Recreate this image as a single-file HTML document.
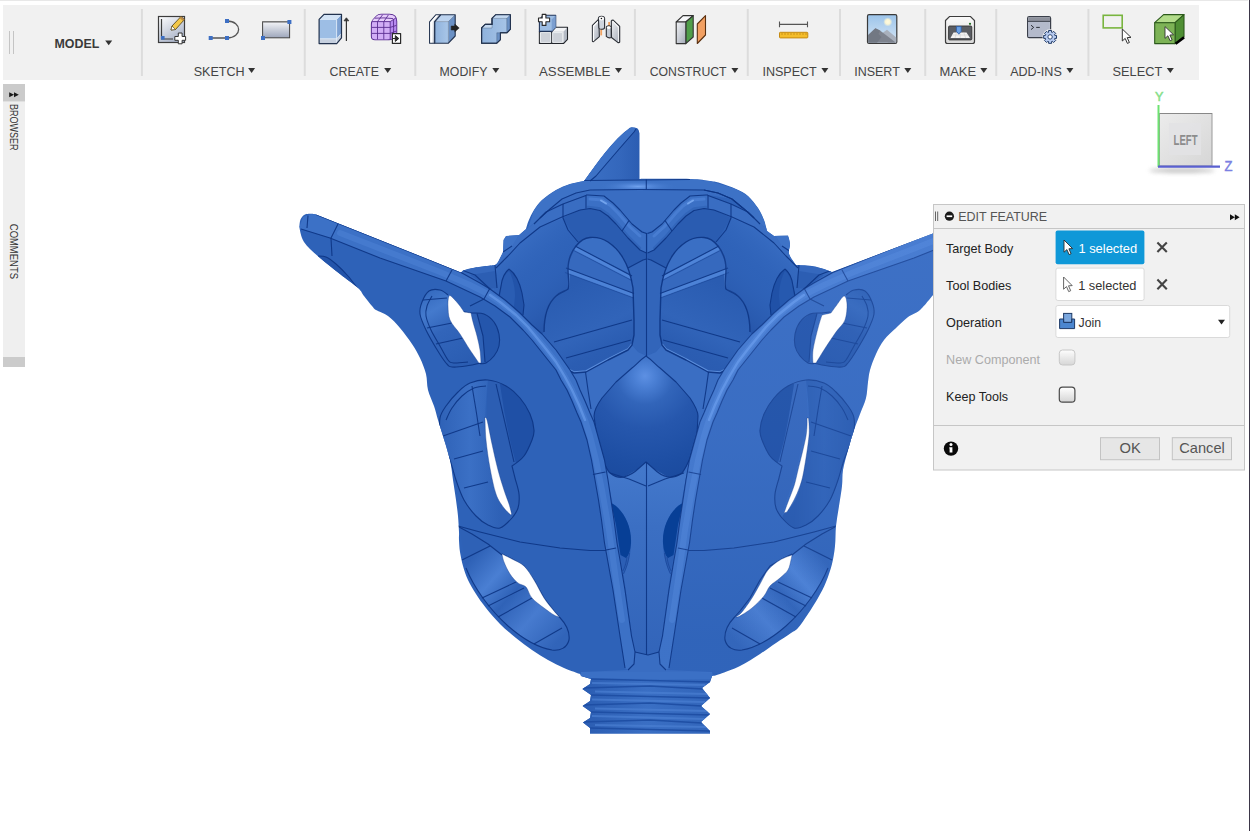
<!DOCTYPE html>
<html><head><meta charset="utf-8"><title>Edit Feature</title>
<style>
html,body{margin:0;padding:0;background:#fff;}
body{width:1250px;height:831px;position:relative;overflow:hidden;font-family:"Liberation Sans",sans-serif;color:#333;}
.abs{position:absolute;}
#topline{left:0;top:0;width:1250px;height:2px;background:#e9e9e9;}
#rightedge{left:1248.7px;top:0;width:1.3px;height:831px;background:#3b3648;}
#toolbar{left:3px;top:5px;width:1196px;height:75px;background:#f1f1f1;}
.sep{position:absolute;top:4px;width:2px;height:68px;background:#dedede;}
.tl{position:absolute;top:59px;font-size:13px;color:#3c3c3c;white-space:nowrap;letter-spacing:-0.2px;line-height:14px;}
.tl i{display:inline-block;width:0;height:0;border-left:3.5px solid transparent;border-right:3.5px solid transparent;border-top:5px solid #333;margin-left:4px;vertical-align:2px;}
#leftpanel{left:3px;top:84px;width:22px;height:283px;background:#efefef;}
#leftpanel .cap{position:absolute;left:0;top:0;width:22px;height:17px;background:#cdcdcd;}
#leftpanel .bot{position:absolute;left:0;bottom:0;width:22px;height:10px;background:#cdcdcd;}
.vt{position:absolute;font-size:9.5px;color:#333;transform-origin:0 0;transform:rotate(90deg);white-space:nowrap;line-height:10px;}
#dialog{left:933px;top:204px;width:310px;height:265px;background:#f1f1f1;border:1px solid #c9c9c9;}
#dialog .lbl{position:absolute;left:12px;font-size:13px;color:#222;white-space:nowrap;line-height:15px;}
</style></head><body>
<svg class="abs" id="model" style="left:0;top:0" width="1250" height="831" viewBox="0 0 1250 831">
<defs>
<linearGradient id="gB" gradientUnits="userSpaceOnUse" x1="300" y1="0" x2="935" y2="0"><stop offset="0" stop-color="#3568be"/><stop offset="0.45" stop-color="#2f62b8"/><stop offset="0.62" stop-color="#3a6fc3"/><stop offset="1" stop-color="#3f75c9"/></linearGradient>
</defs>
<clipPath id="cs"><path d="M299.4,227.0 C299.4,227.0 299.6,221.6 300.5,219.5 C301.4,217.4 303.2,215.5 305.0,214.6 C306.8,213.7 309.2,213.8 311.0,213.8 C312.8,213.8 316.0,214.4 316.0,214.4 L430.0,260.0 L461.0,272.5 L463.0,270.5 C463.0,270.5 469.7,268.4 475.0,267.5 C480.3,266.6 495.0,265.0 495.0,265.0 C495.0,265.0 496.7,264.2 498.0,262.0 C499.3,259.8 503.0,252.0 503.0,252.0 L503.5,240.0 L506.0,236.0 L519.0,235.0 L526.0,229.0 C526.0,229.0 527.2,224.2 528.5,221.0 C529.8,217.8 531.8,213.5 534.0,210.0 C536.2,206.5 538.3,203.3 542.0,200.0 C545.7,196.7 551.3,192.7 556.0,190.0 C560.7,187.3 565.3,185.5 570.0,184.0 C574.7,182.5 584.0,181.0 584.0,181.0 C584.0,181.0 588.7,174.5 592.0,170.0 C595.3,165.5 599.7,159.3 604.0,154.0 C608.3,148.7 613.8,142.3 618.0,138.0 C622.2,133.7 626.5,130.2 629.0,128.4 C631.5,126.7 631.6,127.5 633.0,127.5 C634.4,127.5 636.4,127.6 637.5,128.5 C638.6,129.4 639.4,133.0 639.4,133.0 L639.4,179.0 C639.4,179.0 678.2,178.7 690.0,179.0 C701.8,179.3 705.0,180.3 710.0,181.0 C715.0,181.7 715.7,181.7 720.0,183.0 C724.3,184.3 731.3,186.8 736.0,189.0 C740.7,191.2 744.3,192.8 748.0,196.0 C751.7,199.2 755.3,204.0 758.0,208.0 C760.7,212.0 762.5,216.2 764.0,220.0 C765.5,223.8 767.0,231.0 767.0,231.0 L774.0,236.0 L788.0,235.6 C788.0,235.6 789.8,240.9 790.0,244.0 C790.2,247.1 788.0,250.5 789.0,254.0 C790.0,257.5 796.0,265.0 796.0,265.0 C796.0,265.0 807.3,265.3 812.0,266.0 C816.7,266.7 820.7,268.0 824.0,269.0 C827.3,270.0 832.0,272.0 832.0,272.0 L933.0,233.6 L945.0,229.0 L945.0,290.0 L933.0,295.0 C933.0,295.0 924.2,306.3 920.0,310.0 C915.8,313.7 912.0,314.0 908.0,317.0 C904.0,320.0 900.0,324.2 896.0,328.0 C892.0,331.8 887.3,335.7 884.0,340.0 C880.7,344.3 878.3,349.0 876.0,354.0 C873.7,359.0 871.3,365.3 870.0,370.0 C868.7,374.7 868.7,377.3 868.0,382.0 C867.3,386.7 867.3,392.7 866.0,398.0 C864.7,403.3 862.0,408.7 860.0,414.0 C858.0,419.3 856.0,424.0 854.0,430.0 C852.0,436.0 849.8,443.3 848.0,450.0 C846.2,456.7 844.0,464.0 843.0,470.0 C842.0,476.0 842.7,480.0 842.0,486.0 C841.3,492.0 840.0,499.3 839.0,506.0 C838.0,512.7 836.7,519.3 836.0,526.0 C835.3,532.7 835.7,539.7 835.0,546.0 C834.3,552.3 833.5,558.0 832.0,564.0 C830.5,570.0 828.3,576.3 826.0,582.0 C823.7,587.7 821.0,592.7 818.0,598.0 C815.0,603.3 811.3,609.0 808.0,614.0 C804.7,619.0 800.8,624.8 798.0,628.0 C795.2,631.2 794.7,630.5 791.0,633.0 C787.3,635.5 781.2,639.5 776.0,643.0 C770.8,646.5 766.0,650.2 760.0,654.0 C754.0,657.8 746.7,662.7 740.0,666.0 C733.3,669.3 724.7,672.3 720.0,674.0 C715.3,675.7 712.0,676.0 712.0,676.0 L710.0,682.0 L702.0,688.0 L710.0,698.0 L701.0,706.0 L710.0,714.0 L701.0,722.0 L710.0,731.0 L710.0,733.6 L590.0,733.6 L590.0,728.0 L583.0,722.4 L590.0,718.0 L591.0,712.0 L582.6,706.0 L590.0,701.0 L591.0,695.0 L582.4,689.0 L590.0,684.0 L591.0,679.0 L581.0,676.0 L580.0,674.0 C580.0,674.0 569.3,670.3 564.0,668.0 C558.7,665.7 553.3,663.0 548.0,660.0 C542.7,657.0 537.3,653.7 532.0,650.0 C526.7,646.3 521.3,642.3 516.0,638.0 C510.7,633.7 505.0,629.0 500.0,624.0 C495.0,619.0 490.0,613.0 486.0,608.0 C482.0,603.0 479.0,598.7 476.0,594.0 C473.0,589.3 470.2,584.7 468.0,580.0 C465.8,575.3 464.3,570.7 463.0,566.0 C461.7,561.3 460.7,556.3 460.0,552.0 C459.3,547.7 459.2,543.3 459.0,540.0 C458.8,536.7 459.2,536.0 459.0,532.0 C458.8,528.0 458.5,521.3 458.0,516.0 C457.5,510.7 456.8,506.0 456.0,500.0 C455.2,494.0 454.0,486.7 453.0,480.0 C452.0,473.3 451.7,467.3 450.0,460.0 C448.3,452.7 445.0,442.7 443.0,436.0 C441.0,429.3 439.5,425.0 438.0,420.0 C436.5,415.0 435.7,411.0 434.0,406.0 C432.3,401.0 429.3,395.3 428.0,390.0 C426.7,384.7 427.3,379.3 426.0,374.0 C424.7,368.7 422.3,363.0 420.0,358.0 C417.7,353.0 415.3,349.0 412.0,344.0 C408.7,339.0 404.0,332.7 400.0,328.0 C396.0,323.3 392.0,319.0 388.0,316.0 C384.0,313.0 378.7,311.7 376.0,310.0 C373.3,308.3 374.0,308.3 372.0,306.0 C370.0,303.7 366.3,299.0 364.0,296.0 C361.7,293.0 362.0,291.7 358.0,288.0 C354.0,284.3 346.3,279.0 340.0,274.0 C333.7,269.0 326.0,263.3 320.0,258.0 C314.0,252.7 307.4,247.2 304.0,242.0 C300.6,236.8 299.4,227.0 299.4,227.0 Z"/></clipPath>
<g id="sil"><path fill="#2e62b8" d="M299.4,227.0 C299.4,227.0 299.6,221.6 300.5,219.5 C301.4,217.4 303.2,215.5 305.0,214.6 C306.8,213.7 309.2,213.8 311.0,213.8 C312.8,213.8 316.0,214.4 316.0,214.4 L430.0,260.0 L461.0,272.5 L463.0,270.5 C463.0,270.5 469.7,268.4 475.0,267.5 C480.3,266.6 495.0,265.0 495.0,265.0 C495.0,265.0 496.7,264.2 498.0,262.0 C499.3,259.8 503.0,252.0 503.0,252.0 L503.5,240.0 L506.0,236.0 L519.0,235.0 L526.0,229.0 C526.0,229.0 527.2,224.2 528.5,221.0 C529.8,217.8 531.8,213.5 534.0,210.0 C536.2,206.5 538.3,203.3 542.0,200.0 C545.7,196.7 551.3,192.7 556.0,190.0 C560.7,187.3 565.3,185.5 570.0,184.0 C574.7,182.5 584.0,181.0 584.0,181.0 C584.0,181.0 588.7,174.5 592.0,170.0 C595.3,165.5 599.7,159.3 604.0,154.0 C608.3,148.7 613.8,142.3 618.0,138.0 C622.2,133.7 626.5,130.2 629.0,128.4 C631.5,126.7 631.6,127.5 633.0,127.5 C634.4,127.5 636.4,127.6 637.5,128.5 C638.6,129.4 639.4,133.0 639.4,133.0 L639.4,179.0 C639.4,179.0 678.2,178.7 690.0,179.0 C701.8,179.3 705.0,180.3 710.0,181.0 C715.0,181.7 715.7,181.7 720.0,183.0 C724.3,184.3 731.3,186.8 736.0,189.0 C740.7,191.2 744.3,192.8 748.0,196.0 C751.7,199.2 755.3,204.0 758.0,208.0 C760.7,212.0 762.5,216.2 764.0,220.0 C765.5,223.8 767.0,231.0 767.0,231.0 L774.0,236.0 L788.0,235.6 C788.0,235.6 789.8,240.9 790.0,244.0 C790.2,247.1 788.0,250.5 789.0,254.0 C790.0,257.5 796.0,265.0 796.0,265.0 C796.0,265.0 807.3,265.3 812.0,266.0 C816.7,266.7 820.7,268.0 824.0,269.0 C827.3,270.0 832.0,272.0 832.0,272.0 L933.0,233.6 L945.0,229.0 L945.0,290.0 L933.0,295.0 C933.0,295.0 924.2,306.3 920.0,310.0 C915.8,313.7 912.0,314.0 908.0,317.0 C904.0,320.0 900.0,324.2 896.0,328.0 C892.0,331.8 887.3,335.7 884.0,340.0 C880.7,344.3 878.3,349.0 876.0,354.0 C873.7,359.0 871.3,365.3 870.0,370.0 C868.7,374.7 868.7,377.3 868.0,382.0 C867.3,386.7 867.3,392.7 866.0,398.0 C864.7,403.3 862.0,408.7 860.0,414.0 C858.0,419.3 856.0,424.0 854.0,430.0 C852.0,436.0 849.8,443.3 848.0,450.0 C846.2,456.7 844.0,464.0 843.0,470.0 C842.0,476.0 842.7,480.0 842.0,486.0 C841.3,492.0 840.0,499.3 839.0,506.0 C838.0,512.7 836.7,519.3 836.0,526.0 C835.3,532.7 835.7,539.7 835.0,546.0 C834.3,552.3 833.5,558.0 832.0,564.0 C830.5,570.0 828.3,576.3 826.0,582.0 C823.7,587.7 821.0,592.7 818.0,598.0 C815.0,603.3 811.3,609.0 808.0,614.0 C804.7,619.0 800.8,624.8 798.0,628.0 C795.2,631.2 794.7,630.5 791.0,633.0 C787.3,635.5 781.2,639.5 776.0,643.0 C770.8,646.5 766.0,650.2 760.0,654.0 C754.0,657.8 746.7,662.7 740.0,666.0 C733.3,669.3 724.7,672.3 720.0,674.0 C715.3,675.7 712.0,676.0 712.0,676.0 L710.0,682.0 L702.0,688.0 L710.0,698.0 L701.0,706.0 L710.0,714.0 L701.0,722.0 L710.0,731.0 L710.0,733.6 L590.0,733.6 L590.0,728.0 L583.0,722.4 L590.0,718.0 L591.0,712.0 L582.6,706.0 L590.0,701.0 L591.0,695.0 L582.4,689.0 L590.0,684.0 L591.0,679.0 L581.0,676.0 L580.0,674.0 C580.0,674.0 569.3,670.3 564.0,668.0 C558.7,665.7 553.3,663.0 548.0,660.0 C542.7,657.0 537.3,653.7 532.0,650.0 C526.7,646.3 521.3,642.3 516.0,638.0 C510.7,633.7 505.0,629.0 500.0,624.0 C495.0,619.0 490.0,613.0 486.0,608.0 C482.0,603.0 479.0,598.7 476.0,594.0 C473.0,589.3 470.2,584.7 468.0,580.0 C465.8,575.3 464.3,570.7 463.0,566.0 C461.7,561.3 460.7,556.3 460.0,552.0 C459.3,547.7 459.2,543.3 459.0,540.0 C458.8,536.7 459.2,536.0 459.0,532.0 C458.8,528.0 458.5,521.3 458.0,516.0 C457.5,510.7 456.8,506.0 456.0,500.0 C455.2,494.0 454.0,486.7 453.0,480.0 C452.0,473.3 451.7,467.3 450.0,460.0 C448.3,452.7 445.0,442.7 443.0,436.0 C441.0,429.3 439.5,425.0 438.0,420.0 C436.5,415.0 435.7,411.0 434.0,406.0 C432.3,401.0 429.3,395.3 428.0,390.0 C426.7,384.7 427.3,379.3 426.0,374.0 C424.7,368.7 422.3,363.0 420.0,358.0 C417.7,353.0 415.3,349.0 412.0,344.0 C408.7,339.0 404.0,332.7 400.0,328.0 C396.0,323.3 392.0,319.0 388.0,316.0 C384.0,313.0 378.7,311.7 376.0,310.0 C373.3,308.3 374.0,308.3 372.0,306.0 C370.0,303.7 366.3,299.0 364.0,296.0 C361.7,293.0 362.0,291.7 358.0,288.0 C354.0,284.3 346.3,279.0 340.0,274.0 C333.7,269.0 326.0,263.3 320.0,258.0 C314.0,252.7 307.4,247.2 304.0,242.0 C300.6,236.8 299.4,227.0 299.4,227.0 Z"/></g>
<g clip-path="url(#cs)">
<!--CENTER-->
<g id="center">
<!-- top band -->
<path fill="#3d72c6" d="M528,228 L534,210 L542,200 L556,190 L570,184 L584,181 L639,179 L690,179 L710,181 L736,189 L748,196 L758,208 L764,220 L766,228 L756,221 L746,210 L732,199 L718,193 L704,190 L640,189.5 L590,190 L576,193 L562,199 L550,209 L540,218 Z"/>
<radialGradient id="gTB" gradientUnits="userSpaceOnUse" cx="638" cy="186.5" r="40" gradientTransform="translate(0,158.5) scale(1,0.15)"><stop offset="0" stop-color="#73a4f0" stop-opacity="0.95"/><stop offset="0.4" stop-color="#5a8ee0" stop-opacity="0.6"/><stop offset="1" stop-color="#3d72c6" stop-opacity="0"/></radialGradient><path fill="url(#gTB)" d="M584,181 L639,179.5 L690,179.5 L710,181.5 L704,190 L640,189.5 L590,190 Z"/>
<!-- dome face below band -->
<path fill="#396dc2" d="M590,190 L640,189.5 L704,190 L718,193 L732,199 L708,195 L696,195 L684,202 L674,212 L664,222 L654,230 L646.5,233 L640,230 L630,222 L620,212 L610,202 L598,195 L586,195 L563,204 L550,209 L562,199 L576,193 Z"/>
<!-- V ridge arms -->
<g id="varm">
<path fill="#3b70c5" d="M586,195 L588,195 L604,196 L613,203 L620,210 L632,224 L642,232 L646.5,233.5 L646.5,253 L640,250 L628,238 L616,224 L608,216 L600,210.5 L590,208.5 L586,208.5 Z"/>
<path fill="none" stroke="#5388dc" stroke-width="3" stroke-opacity="0.55" stroke-linecap="round" stroke-linejoin="round" d="M590,199 L602,200 L611,206 L618,213 L630,227 L640,236"/>
<path fill="none" stroke="#7aaaf2" stroke-width="2" stroke-linecap="round" opacity="0.85" d="M601,200.5 L606,203.5"/>
<path fill="none" stroke="#2a5bb0" stroke-width="2.4" stroke-opacity="0.5" stroke-linecap="round" stroke-linejoin="round" d="M588,207 L600,208.5 L608,214 L616,222 L628,236 L640,248"/>
<path fill="#396dc2" d="M563,204 L586,195.5 L586,208.5 L580,210 L563,218 Z"/>
</g>
<use href="#varm" transform="translate(1294,0) scale(-1,1)"/>
<!-- dark panels below ridge -->
<g id="dpanel">
<path fill="#2a5cb1" d="M563,218 L580,210 L590,208.5 L600,210.5 L608,216 L616,224 L628,238 L640,250 L646.5,253 L646.5,259 L643,260 L628,268 L626,275 L600,262 L580,258 L578,242 Z"/>
</g>
<use href="#dpanel" transform="translate(1294,0) scale(-1,1)"/>
<!-- openings -->
<clipPath id="cOp"><path d="M544,332 C544,318 547,304 556,296 C560,292 566,291 568,289 C570,286 568,278 568,270 C568,260 571,252 576,246 C580,241 584,238 590,237.5 C596,237 602,238 608,242 C614,246 619,251 623,258 C628,266 631,276 633,288 L634,320 L634,335 L632,345 L628,350 L608,360 L586,372 L574,373 L568,370 L552,348 Z"/></clipPath>
<g id="opening">
<g clip-path="url(#cOp)">
<path fill="#2c5fb4" d="M530,230 H640 V380 H530 Z"/>
<path fill="#3a6fc4" d="M566,230 H640 V279 L577,247 Z"/>
<path fill="#4e84d8" d="M575,246 L632,276 L632,280.5 L574,250.5 Z"/>
<path fill="#3669be" d="M574,250.5 L632,280.5 L634,294 L566,268.5 Z"/>
<path fill="#4c82d6" d="M566,268 L634,293.5 L634,298 L565,272.5 Z"/>
<linearGradient id="gOp" gradientUnits="userSpaceOnUse" x1="560" y1="290" x2="600" y2="372"><stop offset="0" stop-color="#2a5cb1"/><stop offset="0.55" stop-color="#3164b9"/><stop offset="0.8" stop-color="#2b5db2"/><stop offset="1" stop-color="#2a5bb0"/></linearGradient>
<path fill="url(#gOp)" d="M540,296 L565,272.5 L634,298 L636,380 L540,380 Z"/>
<path fill="none" stroke="#6b9dea" stroke-width="1.6" stroke-opacity="0.75" d="M569,369.5 L574,372 L586,371 L608,359 L628,349 L632,344"/>
<path fill="none" stroke="#6b9dea" stroke-width="1.2" stroke-opacity="0.6" d="M568.5,288 C570,284 568.8,277 568.8,270"/>
</g>
</g>
<use href="#opening" transform="translate(1294,0) scale(-1,1)"/>
<!-- pillar -->
<path fill="#3265ba" d="M628,268 L643,260 L646.5,259 L651,260 L666,268 L661,288 L660,320 L660,335 L662,345 L656,352 L646.5,356 L638,352 L632,345 L634,335 L634,320 L633,288 Z"/>
<!-- collar around heart -->
<path fill="#3a6ec3" d="M566,368 L574,373 L586,372 L608,360 L628,350 L632,345 L638,352 L646.5,356 L656,352 L662,345 L666,350 L686,360 L708,372 L720,373 L728,368 L712,400 L702,424 L696,440 L691,456 L687,472 L606,472 L603,456 L598,440 L592,424 L582,400 L571,378 Z"/>
<!-- heart -->
<radialGradient id="gH" gradientUnits="userSpaceOnUse" cx="645" cy="376" r="105"><stop offset="0" stop-color="#5d90e3"/><stop offset="0.1" stop-color="#4b80d5"/><stop offset="0.27" stop-color="#3265ba"/><stop offset="0.5" stop-color="#2657ad"/><stop offset="0.85" stop-color="#1d4ea3"/><stop offset="1" stop-color="#1b4b9f"/></radialGradient>
<path fill="url(#gH)" d="M646,356 C640,360 636,365 632,368 L616,382 L602,398 C597,405 594,411 594,416 L597,438 L604,462 C606,468 608,471 610,473 C615,477 620,478 624,477 C630,475 635,472 638,469 L646,462 L654,469 C658,473 663,476 668,477 C673,478 678,476 682,473 C686,468 688,463 690,458 L697,434 L698,416 C698,410 694,404 690,398 L676,382 L660,368 C656,365 652,360 646,356 Z"/>
<!-- center panel below heart -->
<linearGradient id="gCP" gradientUnits="userSpaceOnUse" x1="0" y1="470" x2="0" y2="660"><stop offset="0" stop-color="#4378cb"/><stop offset="0.3" stop-color="#3b6fc3"/><stop offset="1" stop-color="#3264b9"/></linearGradient>
<path fill="url(#gCP)" d="M606,472 L610,473 C615,477 620,478 624,477 L638,469 L646,462 L654,469 L668,477 C673,478 678,476 682,473 L687,472 L680,510 L674,550 L668,590 L662,636 L659,652 L648,655 L635,652 L632,636 L626,590 L620,550 L614,510 Z"/>
<!-- neck -->
<path fill="#396dc2" d="M635,652 L648,655 L659,652 L660,664 L666,670 L712,672 L712,676 L581,676 L581,672 L628,670 L634,664 Z"/>
<!-- dark ellipses -->
<g id="dell"><path fill="#2c5fb5" d="M611,503 C622,508 632,525 631,545 C630.5,558 627,568 623.5,574 L621,560 L616,525 Z"/><path fill="#073f96" d="M611,503 C622,508 632,525 631,543 C630.5,550 629,555 626,558 L620.5,555 L616,525 Z"/><path fill="none" stroke="#0f3888" stroke-width="0.7" stroke-opacity="0.7" d="M629.5,553 C628.5,562 626,569 623.5,574 M627,557 C626,564 624.5,568 622.8,571"/></g>
<use href="#dell" transform="translate(1294,0) scale(-1,1)"/>
<g id="clines" fill="none" stroke="#0d3584" stroke-width="1.1" stroke-opacity="0.92" stroke-linejoin="round">
<path d="M590,190 L640,189.5 L704,190 L718,193 L732,199 L744,209 L754,218"/>
<path d="M646.3,179.5 L646.3,189.5"/>
<g id="clh">
<path d="M586,195 L588,195 L604,196 L613,203 L620,210 L632,224 L642,232 L646.5,233.5"/>
<path d="M586,195 L586,208.5"/>
<path d="M580,210 L590,208.5 L600,210.5 L608,216 L616,224 L628,238 L640,250 L646.5,253"/>
<path d="M629,220.5 L622,231"/>
<path d="M544,332 C544,318 547,304 556,296 C560,292 566,291 568,289 C570,286 568,278 568,270 C568,260 571,252 576,246 C580,241 584,238 590,237.5 C596,237 602,238 608,242 C614,246 619,251 623,258 C628,266 631,276 633,288 L634,320 L634,335 L632,345 L628,350 L608,360 L586,372 L574,373 L568,370 L552,348" stroke-width="1.4"/>
<path d="M628,268 L643,260 L646.5,259"/>
<path d="M554,342 L632,320"/><path d="M566,358 L631,340"/>
<path d="M575,246 L632,276"/><path d="M566,268 L634,293.5"/><path d="M574,250.5 L632,280.5" stroke-opacity="0.4"/><path d="M565,272.5 L634,298" stroke-opacity="0.4"/>
<path d="M585.5,372 L588,390 L591,409"/>
<path d="M610,473 L629,479 L646,486"/>
</g>
<use href="#clh" transform="translate(1294,0) scale(-1,1)"/>
<path d="M646.5,233 L646.5,356"/><path d="M646.5,462 L646.5,655"/>
<path d="M646,356 C640,360 636,365 632,368 L616,382 L602,398 C597,405 594,411 594,416 L597,438 L604,462 C606,468 608,471 610,473 C615,477 620,478 624,477 C630,475 635,472 638,469 L646,462 L654,469 C658,473 663,476 668,477 C673,478 678,476 682,473 C686,468 688,463 690,458 L697,434 L698,416 C698,410 694,404 690,398 L676,382 L660,368 C656,365 652,360 646,356 Z"/>
<path d="M635,652 L648,655 L659,652"/>
</g>
</g>
<!--HALF-->
<g id="half">
<!-- shoulder ledges behind wing -->
<path fill="#3568bd" d="M461,272.5 L463,270.5 L475,267.5 L495,265 L498,262 L494,290 L480,283 Z"/>
<path fill="#2c5eb3" d="M470,275 L495,271 L497,288 L490,289 Z"/>
<path fill="#3e73c7" d="M503,252 L503.5,240 L506,236 L519,235 L512,248 L504,262 Z"/>
<!-- back-left petal upper bands -->
<path fill="#3a6ec3" d="M498,262 L503,252 L512,246 L519,235 L526,229 L528,228 L540,218 L550,209 L563,204 L563,218 L540,227 L520,243 L508,256 L496,268 Z"/>
<linearGradient id="gBP" gradientUnits="userSpaceOnUse" x1="505" y1="245" x2="565" y2="315"><stop offset="0" stop-color="#4c82d6" stop-opacity="0.4"/><stop offset="0.45" stop-color="#3568be" stop-opacity="0.1"/><stop offset="1" stop-color="#173f90" stop-opacity="0.38"/></linearGradient>
<path fill="url(#gBP)" d="M496,268 L508,256 L520,243 L540,227 L562,217 L563,218 L568,230 L578,242 L576,246 L571,256 L568,270 L569,284 L567,290 L556,296 L548,306 L545,316 L544,332 L542,334 L532,325 L520,313 L505,300 L490,289 L497,288 Z"/>
<!-- dark ellipse in back-left petal -->
<path fill="#2253a9" d="M509,269 C505,272 502,278 501,286 L499,296 L505,300 L520,313 L523,315 L524,305 L522,293 C520,284 516,274 509,269 Z"/>
<path fill="#2a5db3" d="M509,271 C512,276 515,286 515,296 L514,307 L505,300 L500,296 L502,284 C503,278 506,273 509,271 Z"/>
<!-- wing heart hole: inner wall + dark -->
<linearGradient id="gW1" gradientUnits="userSpaceOnUse" x1="425" y1="290" x2="470" y2="365"><stop offset="0" stop-color="#3368bd"/><stop offset="0.25" stop-color="#447acd"/><stop offset="0.5" stop-color="#3265ba"/><stop offset="0.8" stop-color="#2d60b5"/><stop offset="1" stop-color="#2a5cb1"/></linearGradient>
<path fill="url(#gW1)" d="M448,295 C448.0,295.0 443.2,290.7 440,290 C436.8,289.3 432.0,289.0 429,291 C426.0,293.0 423.5,298.2 422,302 C420.5,305.8 419.3,309.3 420,314 C420.7,318.7 423.3,324.3 426,330 C428.7,335.7 432.7,342.5 436,348 C439.3,353.5 443.3,359.8 446,363 C448.7,366.2 448.7,366.5 452,367 C455.3,367.5 461.2,366.7 466,366 C470.8,365.3 481.0,363.0 481,363 C481.0,363.0 473.5,354.8 470,350 C466.5,345.2 463.3,339.0 460,334 C456.7,329.0 452.0,324.7 450,320 C448.0,315.3 448.3,310.2 448,306 C447.7,301.8 448.0,295.0 448,295 Z"/>
<path fill="#2456ac" d="M464,312 C464.0,312.0 468.7,312.7 472,313 C475.3,313.3 480.3,312.5 484,314 C487.7,315.5 491.5,318.7 494,322 C496.5,325.3 498.2,330.0 499,334 C499.8,338.0 499.8,342.3 499,346 C498.2,349.7 496.2,353.2 494,356 C491.8,358.8 488.3,361.7 486,363 C483.7,364.3 480.0,363.6 480,363.6 C480.0,363.6 480.5,354.6 480,350 C479.5,345.4 478.2,340.7 477,336 C475.8,331.3 474.0,325.8 473,322 C472.0,318.2 471.0,313.0 471,313 C471.0,313.0 464.0,312.0 464,312 Z"/>
<path fill="#2e61b6" d="M471,313 L477,313.5 L483,336 L485,362 L480,363.6 L480,350 L477,336 L473,322 Z"/>
<!-- big lower hole -->
<linearGradient id="gW2" gradientUnits="userSpaceOnUse" x1="440" y1="0" x2="500" y2="0"><stop offset="0" stop-color="#2f62b7"/><stop offset="0.5" stop-color="#3b70c5"/><stop offset="1" stop-color="#2e61b6"/></linearGradient>
<path fill="url(#gW2)" d="M441,436 C439.3,429.0 439.2,423.0 440,418 C440.8,413.0 443.0,410.3 446,406 C449.0,401.7 454.0,395.8 458,392 C462.0,388.2 465.0,385.0 470,383 C475.0,381.0 488.0,380.0 488,380 C488.0,380.0 486.5,393.3 486,400 C485.5,406.7 485.0,413.3 485,420 C485.0,426.7 485.2,432.0 486,440 C486.8,448.0 488.3,459.0 490,468 C491.7,477.0 493.7,487.3 496,494 C498.3,500.7 501.5,504.5 504,508 C506.5,511.5 511.0,515.0 511,515 C511.0,515.0 512.0,518.0 512,518 C512.0,518.0 504.0,526.8 500,528 C496.0,529.2 492.0,527.0 488,525 C484.0,523.0 480.0,520.2 476,516 C472.0,511.8 467.3,506.0 464,500 C460.7,494.0 458.3,486.7 456,480 C453.7,473.3 452.5,467.3 450,460 C447.5,452.7 442.7,443.0 441,436 Z"/>
<path fill="#2c5eb3" d="M488,380 C488.0,380.0 500.7,383.0 506,386 C511.3,389.0 516.0,393.3 520,398 C524.0,402.7 527.7,408.7 530,414 C532.3,419.3 533.7,425.7 534,430 C534.3,434.3 533.7,435.7 532,440 C530.3,444.3 527.3,451.7 524,456 C520.7,460.3 512.0,466.0 512,466 C512.0,466.0 513.8,473.3 515,478 C516.2,482.7 518.5,489.0 519,494 C519.5,499.0 519.2,504.3 518,508 C516.8,511.7 512.0,516.0 512,516 C512.0,516.0 510.3,508.3 509,504 C507.7,499.7 505.8,495.7 504,490 C502.2,484.3 500.0,477.7 498,470 C496.0,462.3 493.8,452.3 492,444 C490.2,435.7 487.8,427.3 487,420 C486.2,412.7 486.8,406.7 487,400 C487.2,393.3 488.0,380.0 488,380 Z"/>
<path fill="#1f50a6" d="M500,384 C500.0,384.0 502.7,383.7 506,386 C509.3,388.3 516.0,393.3 520,398 C524.0,402.7 527.7,408.7 530,414 C532.3,419.3 533.7,425.7 534,430 C534.3,434.3 533.7,435.7 532,440 C530.3,444.3 526.7,452.2 524,456 C521.3,459.8 516.0,463.0 516,463 C516.0,463.0 511.8,448.0 510,440 C508.2,432.0 506.7,424.3 505,415 C503.3,405.7 500.0,384.0 500,384 Z"/>
<!-- bottom hole crescent -->
<linearGradient id="gW3" gradientUnits="userSpaceOnUse" x1="470" y1="560" x2="560" y2="640"><stop offset="0" stop-color="#2e61b6"/><stop offset="0.25" stop-color="#4a7fd3"/><stop offset="0.45" stop-color="#2f62b7"/><stop offset="0.7" stop-color="#477bcf"/><stop offset="1" stop-color="#3164b9"/></linearGradient>
<path fill="url(#gW3)" d="M459,526 L472,534 L488,544 L502,555 L504,562 L510,574 L518,583 L526,587 L532,598 L544,608 L554,615 L559.4,617 C566,624 570,632 569,640 C567,648 560,651 552,650 C540,648 524,640 508,626 C490,610 474,588 466,568 Z"/>
<!-- rim band -->
<linearGradient id="gR" gradientUnits="userSpaceOnUse" x1="520" y1="330" x2="532" y2="321"><stop offset="0" stop-color="#3a6fc4"/><stop offset="0.45" stop-color="#5a8ee0"/><stop offset="0.7" stop-color="#4176ca"/><stop offset="1" stop-color="#3569bf"/></linearGradient>
<path fill="#3c71c6" d="M299.4,227 L303,217 L311,214 L316,214.4 L430,260 L461,272.5 L480,283 L490,289 L505,300 L520,313 L532,325 L542,334 L549,342 L556,350 L563,360 L570,370 L576,380 L580,390 L585,401 L590,413 L594,422 L599,440 L604.5,460 L608,480 L611,500 L614,520 L617,543 L620,560 L625,590 L631.5,636 L635,652 L634,664 L628,670 L625,668 L620,636 L613,590 L604.5,543 L601.5,520 L598.5,500 L595,480 L591.5,460 L587,440 L581,422 L577,413 L572,401 L567,390 L561,380 L556,370 L548,360 L540,350 L532,340 L523,330 L510,317 L495,306 L480,297 L446,281 L380,258 L330,238 L301,229 Z"/>
<path fill="none" stroke="#4d82d6" stroke-width="6" stroke-opacity="0.55" stroke-linecap="round" stroke-linejoin="round" d="M340,233 L440,272 L470,285 L486,293 L500,302 L516,315 L528,327 L537,338 L546,349 L556,362 L565,377 L572,390 L579,405 L585,420 L590,436 L596,460 L602,490 L609,530 L616,580 L622,620"/>
<path fill="none" stroke="#6296e6" stroke-width="2.4" stroke-opacity="0.8" stroke-linecap="round" stroke-linejoin="round" d="M490,295 L500,302 L516,315 L528,327 L537,338 L546,349 L556,362 L565,377 L572,390 L579,405 L585,420"/>
<!-- wing tip dark ellipse -->
<path fill="#2354aa" d="M318,256 C318.0,256.0 323.0,255.7 326,257 C329.0,258.3 332.3,260.8 336,264 C339.7,267.2 344.3,271.8 348,276 C351.7,280.2 358.0,289.0 358,289 C358.0,289.0 346.0,279.8 340,275 C334.0,270.2 325.7,263.2 322,260 C318.3,256.8 318.0,256.0 318,256 Z"/>
<g id="hlines" fill="none" stroke="#0d3584" stroke-width="1.1" stroke-opacity="0.92" stroke-linejoin="round">
<path d="M316,214.4 L430,260 L461,272.5 L480,283 L490,289 L505,300 L520,313 L532,325 L542,334 L549,342 L556,350 L563,360 L570,370 L576,380 L580,390 L585,401 L590,413 L594,422 L599,440 L604.5,460 L608,480 L611,500 L614,520 L617,543 L620,560 L625,590 L631.5,636 L635,652 L634,664 L628,670"/>
<path d="M301,229 L330,238 L380,258 L446,281 L480,297 L495,306 L510,317 L523,330 L532,340 L540,350 L548,360 L556,370 L561,380 L567,390 L572,401 L577,413 L581,422 L587,440 L591.5,460 L595,480 L598.5,500 L601.5,520 L604.5,543 L613,590 L620,636 L625,668"/>
<path d="M308,215.5 L307,228"/><path d="M338,224 L331,238 L332,256"/>
<path d="M452,270 L446,281"/><path d="M490,288 L484,299 L470,306"/>
<path d="M318,256 C319.3,256.2 323.0,255.7 326,257 C329.0,258.3 332.3,260.8 336,264 C339.7,267.2 344.3,271.8 348,276 C351.7,280.2 356.3,286.8 358,289"/>
<!-- wing hole contour -->
<path d="M448,295 C448.0,295.0 443.2,290.7 440,290 C436.8,289.3 432.0,289.0 429,291 C426.0,293.0 423.5,298.2 422,302 C420.5,305.8 419.3,309.3 420,314 C420.7,318.7 423.3,324.3 426,330 C428.7,335.7 432.7,342.5 436,348 C439.3,353.5 443.3,359.8 446,363 C448.7,366.2 448.7,366.5 452,367 C455.3,367.5 461.2,366.7 466,366 C470.8,365.3 481.0,363.0 481,363"/>
<path d="M464,312 C464.0,312.0 468.7,312.7 472,313 C475.3,313.3 480.3,312.5 484,314 C487.7,315.5 491.5,318.7 494,322 C496.5,325.3 498.2,330.0 499,334 C499.8,338.0 499.8,342.3 499,346 C498.2,349.7 496.2,353.2 494,356 C491.8,358.8 488.3,361.7 486,363 C483.7,364.3 481.0,363.5 480,363.6"/>
<path d="M432,296 C431.2,297.7 428.0,302.7 427,306 C426.0,309.3 425.3,312.0 426,316 C426.7,320.0 428.7,325.0 431,330 C433.3,335.0 437.2,341.0 440,346 C442.8,351.0 445.7,357.2 448,360 C450.3,362.8 450.7,362.7 454,363 C457.3,363.3 465.7,362.2 468,362"/>
<path d="M423,300 L447,298"/><path d="M427,328 L452,323"/><path d="M436,344 L463,338"/>
<path d="M477,313.5 L483,336 L485,362"/>
<!-- big hole contour -->
<path d="M450,460 C447.5,452.7 442.7,443.0 441,436 C439.3,429.0 439.2,423.0 440,418 C440.8,413.0 443.0,410.3 446,406 C449.0,401.7 454.0,395.8 458,392 C462.0,388.2 465.0,385.0 470,383 C475.0,381.0 482.0,379.5 488,380 C494.0,380.5 500.7,383.0 506,386 C511.3,389.0 516.0,393.3 520,398 C524.0,402.7 527.7,408.7 530,414 C532.3,419.3 533.7,425.7 534,430 C534.3,434.3 533.7,435.7 532,440 C530.3,444.3 527.3,451.7 524,456 C520.7,460.3 512.0,466.0 512,466 C512.0,466.0 513.8,473.3 515,478 C516.2,482.7 518.5,489.0 519,494 C519.5,499.0 519.2,504.0 518,508 C516.8,512.0 512.0,518.0 512,518 C512.0,518.0 504.0,526.8 500,528 C496.0,529.2 492.0,527.0 488,525 C484.0,523.0 480.0,520.2 476,516 C472.0,511.8 467.3,506.0 464,500 C460.7,494.0 458.3,486.7 456,480 C453.7,473.3 452.5,467.3 450,460 Z"/>
<path d="M446,420 C447.0,418.0 449.3,412.0 452,408 C454.7,404.0 458.3,399.3 462,396 C465.7,392.7 470.0,389.7 474,388 C478.0,386.3 484.0,386.3 486,386"/>
<path d="M443,436 L483,422"/><path d="M454,459 L483,451"/><path d="M464,488 L488,482"/>
<path d="M472,386 L476,410 L480,436"/>
<path d="M496,384 L502,410 L508,436 L514,462"/>
<!-- bottom hole -->
<path d="M502,554 L512,559 L524,566 L534,580 L544,598 L554,611 L559.4,617 C566,624 570,632 569,640 C567,648 560,651 552,650 C540,648 524,640 508,626 C490,610 474,588 466,568"/>
<path d="M459,527 L472,534 L488,544 L502,555"/><path d="M462,560 L490,546"/><path d="M593,474.5 L605.5,472"/><path d="M482,598 L516,582"/><path d="M488,606 L524,588"/><path d="M498,617 L532,598"/><path d="M534,644 L562,628"/>
<!-- petal arc -->
<path d="M458,526 L480,532 L520,542 L560,548 L590,550.5 L606,550.5"/>
<path d="M606,550 L616,548"/>
<!-- back-left petal -->
<path d="M496,268 L508,256 L520,243 L540,227 L562,217 L580,210"/>
<path d="M509,269 C505,272 502,278 501,286 L499,296"/><path d="M509,269 C516,274 520,284 522,293 L524,305 L523,315"/>
<path d="M563,204 L563,218 L568,230 L578,242"/>
<path d="M540,218 L550,209 L562,199 L576,193 L590,190"/>
<path d="M534,224 L546,212 L563,204 L586,195.5"/>
<path d="M463,270.5 L475,275 L490,289"/><path d="M495,265 L497,288"/>
<path d="M503,252 L512,246"/>
</g>
</g>
<use href="#half" transform="translate(1294,0) scale(-1,1)"/>
<!--SCREW-->
<g id="screw">
<linearGradient id="gF" gradientUnits="userSpaceOnUse" x1="590" y1="0" x2="640" y2="0"><stop offset="0" stop-color="#3a6fc4"/><stop offset="0.6" stop-color="#3467bc"/><stop offset="1" stop-color="#2b5db2"/></linearGradient>
<path fill="url(#gF)" d="M584,181 L592,170 L604,154 L618,138 L629,128.4 L633,127.5 C637,127.5 639.4,130 639.4,134 L639.4,179.5 Z"/>
<path fill="#3d72c6" d="M584,181 L592,170 L604,154 L618,138 L629,128.4 L633,127.5 L636,129 L634,132 L620,148 L608,162 L596,176 L590,181 Z"/>
<path fill="none" stroke="#0d3584" stroke-width="1.1" stroke-opacity="0.92" stroke-linejoin="round" d="M636,129 L634,132 L620,148 L608,162 L596,176 L590,181"/>
<path fill="none" stroke="#0d3584" stroke-width="1.1" stroke-opacity="0.92" stroke-linejoin="round" d="M584,180.5 L690,179.5"/>
<!-- screw -->
<linearGradient id="gS" gradientUnits="userSpaceOnUse" x1="583" y1="0" x2="711" y2="0"><stop offset="0" stop-color="#2b5db2"/><stop offset="0.5" stop-color="#3a6fc4"/><stop offset="1" stop-color="#3265ba"/></linearGradient>
<rect x="575" y="676" width="145" height="60" fill="url(#gS)"/>
<path fill="#3b70c5" d="M581,672 L712,672 L713,676 L710,679.5 L591,678.5 L581,676 Z"/>
<g fill="none" stroke="#1d4da2" stroke-width="1.6" stroke-opacity="0.9">
<path d="M591,679 L710,682"/><path d="M583,688 L650,686 L703,689"/><path d="M591,695 L710,698"/><path d="M583,705 L650,703 L702,706"/><path d="M591,712 L710,715"/><path d="M583,722 L650,720 L702,723"/><path d="M590,728 L710,731"/>
</g>
<g fill="none" stroke="#4a7fd2" stroke-width="2" stroke-opacity="0.7">
<path d="M592,683 L705,685"/><path d="M592,699.5 L705,702"/><path d="M592,716 L705,719"/><path d="M595,691.5 L708,694"/><path d="M595,708.5 L708,711"/><path d="M595,725 L708,727"/>
</g>
<!-- right lighting overlay -->
<linearGradient id="gRL" gradientUnits="userSpaceOnUse" x1="0" y1="230" x2="0" y2="640"><stop offset="0" stop-color="#7cacff" stop-opacity="0.2"/><stop offset="0.5" stop-color="#7cacff" stop-opacity="0.15"/><stop offset="1" stop-color="#7cacff" stop-opacity="0.03"/></linearGradient>
<path fill="url(#gRL)" d="M950,220 L864,259 L833,272.5 L814,283 L804,289 L789,300 L774,313 L762,325 L752,334 L745,342 L738,350 L731,360 L724,370 L718,380 L714,390 L709,401 L704,413 L700,422 L695,440 L689.5,460 L686,480 L683,500 L680,520 L677,543 L674,560 L669,590 L662.5,636 L659,652 L660,664 L666,670 L712,673 L950,673 Z"/>
<g transform="translate(1294,0) scale(-1,1)" fill="#1a4a9f" fill-opacity="0.38">
<path d="M448,295 C448.0,295.0 443.2,290.7 440,290 C436.8,289.3 432.0,289.0 429,291 C426.0,293.0 423.5,298.2 422,302 C420.5,305.8 419.3,309.3 420,314 C420.7,318.7 423.3,324.3 426,330 C428.7,335.7 432.7,342.5 436,348 C439.3,353.5 443.3,359.8 446,363 C448.7,366.2 448.7,366.5 452,367 C455.3,367.5 461.2,366.7 466,366 C470.8,365.3 481.0,363.0 481,363 C481.0,363.0 473.5,354.8 470,350 C466.5,345.2 463.3,339.0 460,334 C456.7,329.0 452.0,324.7 450,320 C448.0,315.3 448.3,310.2 448,306 C447.7,301.8 448.0,295.0 448,295 Z"/>
<path d="M441,436 C439.3,429.0 439.2,423.0 440,418 C440.8,413.0 443.0,410.3 446,406 C449.0,401.7 454.0,395.8 458,392 C462.0,388.2 465.0,385.0 470,383 C475.0,381.0 488.0,380.0 488,380 C488.0,380.0 486.5,393.3 486,400 C485.5,406.7 485.0,413.3 485,420 C485.0,426.7 485.2,432.0 486,440 C486.8,448.0 488.3,459.0 490,468 C491.7,477.0 493.7,487.3 496,494 C498.3,500.7 501.5,504.5 504,508 C506.5,511.5 511.0,515.0 511,515 C511.0,515.0 512.0,518.0 512,518 C512.0,518.0 504.0,526.8 500,528 C496.0,529.2 492.0,527.0 488,525 C484.0,523.0 480.0,520.2 476,516 C472.0,511.8 467.3,506.0 464,500 C460.7,494.0 458.3,486.7 456,480 C453.7,473.3 452.5,467.3 450,460 C447.5,452.7 442.7,443.0 441,436 Z"/>
<path d="M477,313.5 L484,314 L494,322 L499,334 L499,346 L494,356 L486,363 L485,362 L483,336 Z"/>
<path d="M500,384 C500.0,384.0 502.7,383.7 506,386 C509.3,388.3 516.0,393.3 520,398 C524.0,402.7 527.7,408.7 530,414 C532.3,419.3 533.7,425.7 534,430 C534.3,434.3 533.7,435.7 532,440 C530.3,444.3 526.7,452.2 524,456 C521.3,459.8 516.0,463.0 516,463 C516.0,463.0 511.8,448.0 510,440 C508.2,432.0 506.7,424.3 505,415 C503.3,405.7 500.0,384.0 500,384 Z"/>
<path d="M509,269 C505,272 502,278 501,286 L499,296 L505,300 L520,313 L523,315 L524,305 L522,293 C520,284 516,274 509,269 Z" fill-opacity="0.2"/>
</g>
</g>
</g>
<g id="holes" fill="#fff" stroke="#143d8c" stroke-width="0.7" stroke-opacity="0.55">
<path d="M449,296 C448.2,297.3 447.8,302.0 448,306 C448.2,310.0 448.0,315.3 450,320 C452.0,324.7 456.7,329.0 460,334 C463.3,339.0 466.8,345.2 470,350 C473.2,354.8 479.0,363.0 479,363 C479.0,363.0 481.0,363.0 481,363 C481.0,363.0 480.7,354.5 480,350 C479.3,345.5 478.2,340.7 477,336 C475.8,331.3 474.0,325.8 473,322 C472.0,318.2 471.0,313.0 471,313 C471.0,313.0 464.0,312.0 464,312 C464.0,312.0 461.8,308.3 460,306 C458.2,303.7 454.8,299.7 453,298 C451.2,296.3 449.8,294.7 449,296 Z"/>
<path d="M844,296 C845.8,295.7 846.8,300.0 847,304 C847.2,308.0 846.8,315.3 845,320 C843.2,324.7 839.5,327.0 836,332 C832.5,337.0 827.3,344.8 824,350 C820.7,355.2 816.0,363.0 816,363 C816.0,363.0 813.0,363.0 813,363 C813.0,363.0 812.2,355.8 813,350 C813.8,344.2 816.5,333.8 818,328 C819.5,322.2 822.0,315.0 822,315 C822.0,315.0 831.0,313.0 831,313 C831.0,313.0 833.8,308.8 836,306 C838.2,303.2 842.2,296.3 844,296 Z"/>
<path d="M485,418 C485.0,418.0 484.8,416.3 485,420 C485.2,423.7 485.2,432.0 486,440 C486.8,448.0 488.3,459.0 490,468 C491.7,477.0 493.7,487.3 496,494 C498.3,500.7 501.5,504.5 504,508 C506.5,511.5 511.0,515.0 511,515 C511.0,515.0 511.6,514.0 511.6,514 C511.6,514.0 510.3,508.0 509,504 C507.7,500.0 505.8,495.7 504,490 C502.2,484.3 500.0,477.7 498,470 C496.0,462.3 493.8,452.3 492,444 C490.2,435.7 488.2,424.3 487,420 C485.8,415.7 485.0,418.0 485,418 Z"/>
<path d="M807,418 C807.0,418.0 807.5,427.3 806,436 C804.5,444.7 800.0,461.7 798,470 C796.0,478.3 795.7,480.7 794,486 C792.3,491.3 789.7,497.5 788,502 C786.3,506.5 784.0,513.0 784,513 C784.0,513.0 787.0,512.0 787,512 C787.0,512.0 791.8,504.3 794,500 C796.2,495.7 798.3,491.0 800,486 C801.7,481.0 802.5,478.3 804,470 C805.5,461.7 808.2,444.7 809,436 C809.8,427.3 808.5,418.0 808.5,418 C808.5,418.0 807.0,418.0 807,418 Z"/>
<path d="M502,554 C502.0,554.0 508.3,557.0 512,559 C515.7,561.0 520.3,562.5 524,566 C527.7,569.5 530.7,574.7 534,580 C537.3,585.3 540.7,592.8 544,598 C547.3,603.2 551.4,607.8 554,611 C556.6,614.2 559.4,617.0 559.4,617 C559.4,617.0 556.6,616.5 554,615 C551.4,613.5 547.7,610.8 544,608 C540.3,605.2 535.0,601.5 532,598 C529.0,594.5 528.3,589.5 526,587 C523.7,584.5 520.7,585.2 518,583 C515.3,580.8 512.3,577.5 510,574 C507.7,570.5 505.3,565.3 504,562 C502.7,558.7 502.0,554.0 502,554 Z"/>
<path d="M792,555 C792.0,555.0 784.0,557.5 780,560 C776.0,562.5 771.3,566.0 768,570 C764.7,574.0 762.7,579.3 760,584 C757.3,588.7 755.0,593.3 752,598 C749.0,602.7 744.7,608.8 742,612 C739.3,615.2 735.6,617.0 735.6,617 C735.6,617.0 737.3,617.5 740,616 C742.7,614.5 748.0,611.3 752,608 C756.0,604.7 761.0,599.7 764,596 C767.0,592.3 767.3,589.0 770,586 C772.7,583.0 777.0,580.7 780,578 C783.0,575.3 786.2,573.0 788,570 C789.8,567.0 790.3,562.5 791,560 C791.7,557.5 792.0,555.0 792,555 Z"/>
</g>
</svg>
<svg class="abs" id="tb" style="left:0;top:0" width="1250" height="90" viewBox="0 0 1250 90">
<rect x="3" y="5" width="1196" height="75" fill="#f1f1f1"/>
<rect x="0" y="0" width="1248" height="1" fill="#e8e8e8"/>
<rect x="140.9" y="9" width="2" height="67" fill="#dcdcdc"/>
<rect x="303.8" y="9" width="2" height="67" fill="#dcdcdc"/>
<rect x="414.3" y="9" width="2" height="67" fill="#dcdcdc"/>
<rect x="524.4" y="9" width="2" height="67" fill="#dcdcdc"/>
<rect x="633.9" y="9" width="2" height="67" fill="#dcdcdc"/>
<rect x="746.8" y="9" width="2" height="67" fill="#dcdcdc"/>
<rect x="839.0" y="9" width="2" height="67" fill="#dcdcdc"/>
<rect x="924.2" y="9" width="2" height="67" fill="#dcdcdc"/>
<rect x="995.2" y="9" width="2" height="67" fill="#dcdcdc"/>
<rect x="1087.4" y="9" width="2" height="67" fill="#dcdcdc"/>
<rect x="9" y="31" width="1" height="23" fill="#c4c4c4"/><rect x="13" y="31" width="1" height="23" fill="#c4c4c4"/>
<text x="54.5" y="47.6" font-family="Liberation Sans, sans-serif" font-weight="bold" font-size="13" fill="#3a3a3a" textLength="44.8" lengthAdjust="spacingAndGlyphs">MODEL</text>
<path d="M105.2,40.4 h7 l-3.5,4.8 z" fill="#333"/>
<text x="193.7" y="75.6" font-family="Liberation Sans, sans-serif" font-size="13" fill="#444" textLength="51.0" lengthAdjust="spacingAndGlyphs">SKETCH</text>
<path d="M248.1,67.9 h7 l-3.5,5 z" fill="#333"/>
<text x="329.6" y="75.6" font-family="Liberation Sans, sans-serif" font-size="13" fill="#444" textLength="49.3" lengthAdjust="spacingAndGlyphs">CREATE</text>
<path d="M384.2,67.9 h7 l-3.5,5 z" fill="#333"/>
<text x="439.6" y="75.6" font-family="Liberation Sans, sans-serif" font-size="13" fill="#444" textLength="47.9" lengthAdjust="spacingAndGlyphs">MODIFY</text>
<path d="M492.3,67.9 h7 l-3.5,5 z" fill="#333"/>
<text x="539" y="75.6" font-family="Liberation Sans, sans-serif" font-size="13" fill="#444" textLength="71.4" lengthAdjust="spacingAndGlyphs">ASSEMBLE</text>
<path d="M615.0,67.9 h7 l-3.5,5 z" fill="#333"/>
<text x="649.7" y="75.6" font-family="Liberation Sans, sans-serif" font-size="13" fill="#444" textLength="76.9" lengthAdjust="spacingAndGlyphs">CONSTRUCT</text>
<path d="M731.4,67.9 h7 l-3.5,5 z" fill="#333"/>
<text x="762.4" y="75.6" font-family="Liberation Sans, sans-serif" font-size="13" fill="#444" textLength="54.4" lengthAdjust="spacingAndGlyphs">INSPECT</text>
<path d="M821.4,67.9 h7 l-3.5,5 z" fill="#333"/>
<text x="854.2" y="75.6" font-family="Liberation Sans, sans-serif" font-size="13" fill="#444" textLength="45.6" lengthAdjust="spacingAndGlyphs">INSERT</text>
<path d="M904.3,67.9 h7 l-3.5,5 z" fill="#333"/>
<text x="939.4" y="75.6" font-family="Liberation Sans, sans-serif" font-size="13" fill="#444" textLength="36.8" lengthAdjust="spacingAndGlyphs">MAKE</text>
<path d="M980.3,67.9 h7 l-3.5,5 z" fill="#333"/>
<text x="1010.2" y="75.6" font-family="Liberation Sans, sans-serif" font-size="13" fill="#444" textLength="51.6" lengthAdjust="spacingAndGlyphs">ADD-INS</text>
<path d="M1066.4,67.9 h7 l-3.5,5 z" fill="#333"/>
<text x="1112.6" y="75.6" font-family="Liberation Sans, sans-serif" font-size="13" fill="#444" textLength="49.6" lengthAdjust="spacingAndGlyphs">SELECT</text>
<path d="M1166.8,67.9 h7 l-3.5,5 z" fill="#333"/>
<defs>
<linearGradient id="igW" x1="0" y1="0" x2="0.6" y2="1"><stop offset="0" stop-color="#ffffff"/><stop offset="1" stop-color="#a9b3c8"/></linearGradient>
<linearGradient id="igR" x1="0" y1="0" x2="0" y2="1"><stop offset="0" stop-color="#f4f5f8"/><stop offset="1" stop-color="#9da6bb"/></linearGradient>
<linearGradient id="igBf" x1="0" y1="0" x2="1" y2="0"><stop offset="0" stop-color="#8fb2dc"/><stop offset="1" stop-color="#a9c6e8"/></linearGradient>
<linearGradient id="igG" x1="0" y1="0" x2="1" y2="1"><stop offset="0" stop-color="#f2f3f5"/><stop offset="1" stop-color="#a4abb8"/></linearGradient>
<linearGradient id="igSky" x1="0" y1="0" x2="0" y2="1"><stop offset="0" stop-color="#9cc4ea"/><stop offset="1" stop-color="#d6e6f5"/></linearGradient>
</defs>
<!-- create sketch -->
<g>
<rect x="158.5" y="16.5" width="26" height="26" fill="url(#igW)" stroke="#3d3d3d" stroke-width="1.2"/>
<path d="M161.5,19 V39 H173" fill="none" stroke="#3d3d3d" stroke-width="1.2"/>
<rect x="161" y="36" width="3.6" height="3.6" fill="#3d6fc4"/>
<path d="M171,30 L172,26 L181,16.5 L184.5,19.5 L175.5,29.5 Z" fill="#f3c84a" stroke="#4a3a10" stroke-width="0.8"/>
<path d="M171,30 L172,26 L175.5,29.5 Z" fill="#fff" stroke="#4a3a10" stroke-width="0.6"/>
<path d="M181,16.5 L184.5,19.5 L183,21 L179.6,18 Z" fill="#b98a4a"/>
<path d="M178.3,33 h3.8 v3.5 h3.5 v3.8 h-3.5 v3.5 h-3.8 v-3.5 h-3.5 v-3.8 h3.5 z" fill="#fff" stroke="#333" stroke-width="1"/>
</g>
<!-- line -->
<g>
<path d="M210.7,38 H227 C242.5,38 242.5,21 227,21" fill="none" stroke="#555" stroke-width="1.3"/>
<rect x="208.7" y="36" width="4" height="4" fill="#3d6fc4"/><rect x="225" y="36" width="4" height="4" fill="#3d6fc4"/><rect x="225" y="19" width="4" height="4" fill="#3d6fc4"/>
</g>
<!-- rectangle -->
<g>
<rect x="262.6" y="21.8" width="27" height="16" fill="url(#igR)" stroke="#444" stroke-width="1"/>
<path d="M262.6,21.8 H289.6" stroke="#777" stroke-width="1"/>
<rect x="261" y="36" width="4" height="4" fill="#3d6fc4"/><rect x="287.4" y="20" width="4" height="4" fill="#3d6fc4"/>
</g>
<!-- extrude -->
<g stroke-linejoin="round">
<path d="M319.1,19.3 L324,14.3 H341.5 V37.8 L336.7,43.6 H319.1 Z" fill="#9dbee5" stroke="none"/>
<path d="M319.1,19.3 L324,14.3 H341.5 L336.7,19.3 Z" fill="#d3e3f5"/>
<path d="M336.7,19.3 L341.5,14.3 V37.8 L336.7,43.6 Z" fill="#7ea2d3"/>
<path d="M319.1,38.8 H336.7 L341.5,33.4 V37.8 L336.7,43.6 H319.1 Z" fill="#c6d0df"/>
<path d="M319.6,19.4 H336.6 V43 M336.7,19.3 L341.2,14.7 M319.6,38.8 H336.7 L341.2,33.6" fill="none" stroke="#e8f1fb" stroke-width="0.9" stroke-opacity="0.9"/>
<path d="M319.1,19.3 L324,14.3 H341.5 V37.8 L336.7,43.6 H319.1 Z" fill="none" stroke="#22324e" stroke-width="1.2"/>
<path d="M346.4,41 V20" stroke="#333" fill="none" stroke-width="1.2"/>
<path d="M344,20.8 L346.4,17.8 L348.8,20.8 Z" stroke="#333" fill="#333" stroke-width="0.8"/>
</g>
<!-- form -->
<g stroke-linejoin="round">
<path d="M371.4,24.5 Q371.4,21.5 373.2,19.6 L376.8,15.8 Q378.3,14.3 381,14.3 H389.5 Q396.7,14.3 396.7,21.5 V32.5 Q396.7,35.2 395,36.8 L392.5,38.8 Q391.2,39.8 389,39.8 H375 Q371.4,39.8 371.4,36.3 Z" fill="#c79df2" stroke="#5a2d91" stroke-width="1.1"/>
<path d="M371.9,22.5 Q372.3,20.7 373.4,19.6 L376.9,16 Q378.3,14.8 381,14.8 H389.5 Q394,14.8 395.6,18 L390.5,21.6 H373 Z" fill="#e6cdfb"/>
<path d="M390.3,21.8 L395.8,18.2 Q396.2,19.6 396.2,21.5 V32.5 Q396.2,35 394.8,36.4 L392.3,38.4 Q391.3,39.2 390.3,39.3 Z" fill="#b78af0"/>
<rect x="371.9" y="21.6" width="18.3" height="17.7" rx="3" fill="#d2adf6"/>
<path d="M372,21.6 H390.2 M390.2,21.6 V39.3 M377.5,21.6 V39.4 M383.8,21.6 V39.4 M371.9,27.4 H390.2 M371.9,33.4 H390.2 M377.5,21.6 L382.6,14.8 M383.8,21.6 L388.4,14.9 M374.6,18.2 Q384,17.4 393.2,18.6 M390.2,21.6 L395.8,18 M393.4,19.6 Q393.8,28 393.4,37.5 M390.2,27.4 L396.4,25.4 M390.2,33.4 L396.4,31" fill="none" stroke="#5a2d91" stroke-width="0.9"/>
<rect x="392.4" y="33.6" width="8.2" height="9.8" fill="#fff" stroke="#2a2a2a" stroke-width="1.2"/>
<path d="M392.2,38.5 H396 M395.3,35.6 L398.8,38.5 L395.3,41.4 Z" stroke="#2a2a2a" stroke-width="1" fill="#2a2a2a"/>
</g>
<!-- press pull -->
<g stroke="#22324e" stroke-width="1.1" stroke-linejoin="round">
<path d="M429.6,21.8 L435.8,14.8 H440.6 L434.6,21.8 V43.2 H429.6 Z" fill="url(#igG)"/>
<path d="M430.2,22.2 L436,15.4 H438 L432.6,22 V42.6 H430.2 Z" fill="#fff" stroke="none"/>
<path d="M434.8,21.6 L440.8,14.8 H455.2 L448.4,21.6 Z" fill="#bcd3ef" stroke="none"/>
<path d="M448.4,21.6 L455.2,14.8 V36 L448.4,43.2 Z" fill="#6b91c5" stroke="none"/>
<rect x="434.8" y="21.6" width="13.6" height="21.6" fill="url(#igBf)" stroke="none"/>
<path d="M434.8,21.6 H448.4 V43.2 M448.4,21.6 L455.2,14.8" fill="none" stroke-opacity="0.35" stroke-width="0.8"/>
<path d="M434.8,43.2 V21.6 L440.8,14.8 H455.2 V36 L448.4,43.2 Z" fill="none"/>
<path d="M451.2,26 H454.8 V24 L459.2,28 L454.8,31.8 V30 H451.2 Z" fill="#222" stroke="#222" stroke-width="0.5"/>
</g>
<!-- combine -->
<g stroke="#22324e" stroke-width="1.1" stroke-linejoin="round">
<path d="M492,18.4 L495.6,14.8 H510.4 V29.2 L506.8,32.8 H500.4 V39.6 L496.8,43.2 H481.6 V28 L485.2,24.4 H492 Z" fill="url(#igBf)"/>
<path d="M492,18.4 L495.6,14.8 H510.4 L506.8,18.4 Z" fill="#c4d9f1" stroke="none"/>
<path d="M481.6,28 L485.2,24.4 H492 V28 Z" fill="#c4d9f1" stroke="none"/>
<path d="M506.8,18.4 L510.4,14.8 V29.2 L506.8,32.8 Z" fill="#6b91c5" stroke="none"/>
<path d="M496.8,32.8 H500.4 V39.6 L496.8,43.2 Z" fill="#6b91c5" stroke="none"/>
<path d="M492,18.4 H506.8 L510.4,14.8 M506.8,18.4 V32.8 M492,18.4 V28 M481.6,28 H492 M496.8,32.8 V43.2 M496.8,32.8 H506.8" fill="none" stroke-width="0.8" stroke-opacity="0.35"/>
<path d="M492,18.4 L495.6,14.8 H510.4 V29.2 L506.8,32.8 H500.4 V39.6 L496.8,43.2 H481.6 V28 L485.2,24.4 H492 Z" fill="none"/>
</g>
<!-- new component -->
<g stroke="#23262c" stroke-width="1.1" stroke-linejoin="round">
<path d="M551.7,31.6 L555.7,27.2 H567.5 L563.7,31.6 Z" fill="#f3f4f6" stroke="none"/>
<path d="M563.7,31.6 L567.5,27.2 V39.3 L563.7,43.4 Z" fill="#b4bac5" stroke="none"/>
<rect x="539.4" y="31.6" width="12.3" height="11.8" fill="#cdd1d8"/>
<rect x="551.7" y="31.6" width="12" height="11.8" fill="#cdd1d8" stroke="none"/>
<path d="M551.7,43.4 V31.6 M551.7,31.6 L555.7,27.2 H567.5 V39.3 L563.7,43.4 H551.7" fill="none"/>
<path d="M540.4,32.6 H550.7 V42.4 H540.4 Z M552.7,32.6 H562.7 V42.4 H552.7 Z" fill="none" stroke="#eef0f3" stroke-width="0.9"/>
<path d="M539.4,19.5 L543.4,15.2 H555.7 V27.2 L551.7,31.4 H539.4 Z" fill="#9dbde3" stroke="#1f3358"/>
<path d="M551.7,19.5 L555.7,15.2 V27.2 L551.7,31.4 Z" fill="#7c9fd0" stroke="none"/>
<path d="M542.2,14.4 h3.7 v3.6 h3.7 v3.7 h-3.7 v3.7 h-3.7 v-3.7 h-3.7 v-3.7 h3.7 z" fill="#fff" stroke="#2a2a2a" stroke-width="1.1"/>
</g>
<!-- joint -->
<g stroke="#2c2f36" stroke-width="1.1" stroke-linejoin="round">
<path d="M601.2,29 V35.4" stroke="#f0a262" stroke-width="1.8"/>
<path d="M592.4,25.4 L598.8,19.2 L599.4,36.6 L593.2,41.8 Q592.4,41.8 592.4,41 Z" fill="url(#igG)"/>
<path d="M592.9,26 L598.4,20.6 L598.6,22 L593.8,26.8 L594.2,40.5 L592.9,41.2 Z" fill="#fff" stroke="none"/>
<path d="M598.4,18.6 Q598.4,16.2 601.5,16.2 Q604.6,16.2 604.6,18.6 V27.2 Q604.6,29.3 601.5,29.3 Q599.2,29.3 598.9,28 Z" fill="#cfd5de"/>
<ellipse cx="601.5" cy="18.5" rx="2.6" ry="1.9" fill="#fff" stroke="none"/>
<circle cx="601.4" cy="18.5" r="0.8" fill="#111" stroke="none"/>
<path d="M609.1,22 V27.4" stroke="#f0a262" stroke-width="1.8"/>
<path d="M606.3,28 Q606.3,25.9 608.8,25.9 Q611.3,25.9 611.3,28 V37.4 Q608.8,38.6 606.3,36.4 Z" fill="#c3cad5"/>
<ellipse cx="608.8" cy="27.6" rx="2" ry="1.4" fill="#fff" stroke="none"/>
<path d="M611.3,21 Q611.8,20 613.2,20.1 L619.7,26.4 V42 Q619.4,42.8 618,42.6 L611.5,37.5 Z" fill="url(#igG)"/>
<path d="M612.2,21 L613,20.7 L619,26.8 V41.8 L618,42 L617.8,27.4 Z" fill="#fff" stroke="none" opacity="0.8"/>
</g>
<!-- construct -->
<g stroke="#333" stroke-width="1.1" stroke-linejoin="round">
<path d="M676.2,22 L683,15.6 H693.2 L685.8,22 Z" fill="#f7f8fa"/>
<path d="M685.8,22 L693.2,15.6 V37 L685.8,43.6 Z" fill="#4f9e4a"/>
<rect x="676.2" y="22" width="9.6" height="21.6" fill="url(#igG)"/>
<path d="M697.3,24 L705.5,15.6 V35 L697.3,43.5 Z" fill="#f2a062" stroke="#5a3010"/>
</g>
<!-- inspect -->
<g>
<path d="M779.5,24.4 H807.5 M779.5,21.6 V27.2 M807.5,21.6 V27.2" stroke="#555" stroke-width="1.1" fill="none"/>
<rect x="779.5" y="32.3" width="28.3" height="5.6" rx="0.8" fill="#f4bd2a" stroke="#c58a12" stroke-width="1"/>
<path d="M782,33 v2 M785,33 v2 M788,33 v2 M791,33 v2 M794,33 v2 M797,33 v2 M800,33 v2 M803,33 v2 M806,33 v2" stroke="#c58a12" stroke-width="0.8"/>
</g>
<!-- insert -->
<g>
<defs><radialGradient id="igSun"><stop offset="0" stop-color="#fffbe0"/><stop offset="0.5" stop-color="#fbf6d4"/><stop offset="1" stop-color="#fbf6d4" stop-opacity="0"/></radialGradient>
<linearGradient id="igMk" x1="0" y1="0" x2="0" y2="1"><stop offset="0" stop-color="#fafafa"/><stop offset="1" stop-color="#d8d8d8"/></linearGradient></defs>
<rect x="867.5" y="14.7" width="29.3" height="28.8" rx="1.5" fill="url(#igSky)" stroke="#3a3a3a" stroke-width="1.2"/>
<circle cx="887.8" cy="21.9" r="4.6" fill="url(#igSun)"/>
<path d="M881,34 L887,29.8 L896.2,37.5 V42.8 H888 Z" fill="#a9b0bc"/>
<path d="M868.2,35 L875.4,28.2 L880,30.5 L896,42.8 H868.2 Z" fill="#7e838e"/>
<path d="M875.4,28.2 L880,30.5 L878.5,34 L881.5,37 L877,42.8 H868.2 V35 Z" fill="#6f747f" opacity="0.75"/>
</g>
<!-- make -->
<g>
<path d="M945.5,20.5 L949.5,16.5 H970.5 L974.5,20.5 V41.5 Q974.5,43.5 972.5,43.5 H947.5 Q945.5,43.5 945.5,41.5 Z" fill="url(#igMk)" stroke="#3d3d3d" stroke-width="1.2"/>
<rect x="948.6" y="26" width="23.2" height="13.9" rx="1" fill="#5a5d63" stroke="#333" stroke-width="0.9"/>
<path d="M953.5,32.5 H966.5 L970,38 H950.5 Z" fill="#f4f4f4"/>
<path d="M956.5,32.5 L955,38 M960.2,32.5 V38 M963.8,32.5 L965.6,38 M952.2,35 H968.2" stroke="#d0d0d0" stroke-width="0.6" fill="none"/>
<path d="M956.4,26.6 H961.2 V31.2 L958.8,34.2 L956.4,31.2 Z" fill="#6aa2e6" stroke="#2a5aa8" stroke-width="0.8"/>
<circle cx="970" cy="23.8" r="1.1" fill="#1f6b1f"/>
</g>
<!-- add-ins -->
<g>
<rect x="1027.6" y="16.6" width="23" height="21" rx="1.6" fill="url(#igR)" stroke="#3a3f4a" stroke-width="1.2"/>
<rect x="1028.2" y="17.2" width="21.8" height="3.8" fill="#8d919c"/>
<path d="M1028,21.4 H1050.2" stroke="#3a3f4a" stroke-width="1"/>
<rect x="1028.4" y="22" width="21.4" height="15" fill="#b4bacb"/>
<path d="M1031,25.2 L1033.7,27.4 L1031,29.6 M1036.2,27.4 H1039.8" stroke="#2a2e36" stroke-width="1" fill="none"/>
<g transform="translate(1050.1,36.9)">
<circle r="7.6" fill="#f1f1f1"/>
<path d="M4.67,-1.49 L6.43,-1.50 L6.43,1.50 L4.67,1.49 L4.36,2.24 L5.61,3.48 L3.48,5.61 L2.24,4.36 L1.49,4.67 L1.50,6.43 L-1.50,6.43 L-1.49,4.67 L-2.24,4.36 L-3.48,5.61 L-5.61,3.48 L-4.36,2.24 L-4.67,1.49 L-6.43,1.50 L-6.43,-1.50 L-4.67,-1.49 L-4.36,-2.24 L-5.61,-3.48 L-3.48,-5.61 L-2.24,-4.36 L-1.49,-4.67 L-1.50,-6.43 L1.50,-6.43 L1.49,-4.67 L2.24,-4.36 L3.48,-5.61 L5.61,-3.48 L4.36,-2.24 Z" fill="#b7cbf1" stroke="#1f3a66" stroke-width="1" stroke-linejoin="round"/>
<circle r="2.2" fill="#fff" stroke="#1f3a66" stroke-width="0.9"/>
</g>
</g>
<!-- select window -->
<g>
<rect x="1103.2" y="15.3" width="19" height="12.6" fill="#f1f1f1" stroke="#79b53f" stroke-width="1.6"/>
<path d="M1122.3,29 V41 L1125.2,38.4 L1127.4,43.4 L1129.4,42.5 L1127.2,37.6 L1131,37.4 Z" fill="#fff" stroke="#333" stroke-width="1"/>
</g>
<!-- select cube -->
<g stroke="#2c5a1c" stroke-width="1.1" stroke-linejoin="round">
<path d="M1154.7,22.7 L1163.6,14.6 H1184 L1175.1,22.7 Z" fill="#b2dc8a"/>
<path d="M1175.1,22.7 L1184,14.6 V37 L1175.1,43.6 Z" fill="#4f8f34"/>
<rect x="1154.7" y="22.7" width="20.4" height="20.9" fill="#7db356"/>
<path d="M1175.6,43.8 L1184,37.4" stroke="#000" stroke-width="2.6"/>
<path d="M1165,26.6 V38.4 L1167.9,35.8 L1170.1,40.8 L1172.1,39.9 L1169.9,35 L1173.6,34.8 Z" fill="#fff" stroke="#333" stroke-width="0.9"/>
</g>

</svg>
<svg class="abs" id="lp" style="left:0;top:80px" width="40" height="300" viewBox="0 80 40 300">
<rect x="3" y="84" width="22" height="283" fill="#efefef"/>
<rect x="3" y="84" width="22" height="17.4" fill="#cbcbcb"/>
<rect x="3" y="357" width="22" height="10" fill="#cbcbcb"/>
<path d="M9.2,92.3 L14,94.8 L9.2,97.3 Z M14,92.3 L18.8,94.8 L14,97.3 Z" fill="#1a1a1a"/>
<text transform="translate(10,104) rotate(90)" font-family="Liberation Sans, sans-serif" font-size="10" fill="#333" textLength="46.6" lengthAdjust="spacingAndGlyphs">BROWSER</text>
<text transform="translate(10,223.8) rotate(90)" font-family="Liberation Sans, sans-serif" font-size="10" fill="#333" textLength="55.2" lengthAdjust="spacingAndGlyphs">COMMENTS</text>
</svg>
<svg class="abs" id="dlg" style="left:925px;top:195px" width="325" height="290" viewBox="925 195 325 290">
<defs><linearGradient id="cbg" x1="0" y1="0" x2="0" y2="1"><stop offset="0" stop-color="#ffffff"/><stop offset="1" stop-color="#d4d4d4"/></linearGradient></defs>
<rect x="933.5" y="204.5" width="311" height="265.5" fill="#f1f1f1" stroke="#c6c6c6" stroke-width="1"/>
<path d="M934,228.5 H1244 M934,425.5 H1244" stroke="#c6c6c6" stroke-width="1"/>
<path d="M935.5,211.5 V221 M937.7,211.5 V221" stroke="#555" stroke-width="0.9"/>
<circle cx="949.4" cy="216.2" r="4.6" fill="#1a1a1a"/><rect x="946.6" y="215.4" width="5.6" height="1.7" fill="#fff"/>
<text x="958.3" y="221.1" font-family="Liberation Sans, sans-serif" font-size="13" fill="#555" textLength="88.9" lengthAdjust="spacingAndGlyphs" >EDIT FEATURE</text>
<path d="M1230,214.2 L1234.8,217.2 L1230,220.2 Z M1234.8,214.2 L1239.6,217.2 L1234.8,220.2 Z" fill="#111"/>
<text x="946" y="252.8" font-family="Liberation Sans, sans-serif" font-size="13" fill="#222" textLength="67.2" lengthAdjust="spacingAndGlyphs" >Target Body</text>
<rect x="1055.6" y="230.6" width="88.8" height="33.6" rx="2" fill="#0f98d8"/>
<path d="M0,0 V12.2 L2.9,9.6 L5.1,14.6 L7.1,13.7 L4.9,8.8 L8.6,8.6 Z" transform="translate(1064,240)" fill="#fff" stroke="#2a2a2a" stroke-width="0.9"/>
<text x="1078.4" y="252.8" font-family="Liberation Sans, sans-serif" font-size="13" fill="#fff" textLength="58.8" lengthAdjust="spacingAndGlyphs" >1 selected</text>
<path d="M1157.4,242.4 L1166.8,252 M1166.8,242.4 L1157.4,252" stroke="#444" stroke-width="2.1"/>
<text x="946.1" y="289.6" font-family="Liberation Sans, sans-serif" font-size="13" fill="#222" textLength="65.3" lengthAdjust="spacingAndGlyphs" >Tool Bodies</text>
<rect x="1055.9" y="268.1" width="88.2" height="32.4" rx="2" fill="#fff" stroke="#dadada" stroke-width="1"/>
<path d="M0,0 V12.2 L2.9,9.6 L5.1,14.6 L7.1,13.7 L4.9,8.8 L8.6,8.6 Z" transform="translate(1063.6,277)" fill="#fff" stroke="#555" stroke-width="0.9"/>
<text x="1078.2" y="289.6" font-family="Liberation Sans, sans-serif" font-size="13" fill="#333" textLength="58.3" lengthAdjust="spacingAndGlyphs" >1 selected</text>
<path d="M1157.4,279.6 L1166.8,289.2 M1166.8,279.6 L1157.4,289.2" stroke="#444" stroke-width="2.1"/>
<text x="946.1" y="326.8" font-family="Liberation Sans, sans-serif" font-size="13" fill="#222" textLength="55.6" lengthAdjust="spacingAndGlyphs" >Operation</text>
<rect x="1055.9" y="305.5" width="173.8" height="32" rx="2" fill="#fff" stroke="#dadada" stroke-width="1"/>
<rect x="1063.6" y="313.4" width="8.2" height="9" fill="#7ba7de" stroke="#1f3a66" stroke-width="1"/>
<path d="M1059.6,319 H1063.6 V322.4 H1071.8 V319 H1074.6 V328.6 H1059.6 Z" fill="#4c86cf" stroke="#1f3a66" stroke-width="1"/>
<text x="1078.5" y="326.8" font-family="Liberation Sans, sans-serif" font-size="13" fill="#333" textLength="22.5" lengthAdjust="spacingAndGlyphs" >Join</text>
<path d="M1218,319.8 h7 l-3.5,4.6 z" fill="#222"/>
<text x="946.1" y="363.9" font-family="Liberation Sans, sans-serif" font-size="13" fill="#ababab" textLength="93.9" lengthAdjust="spacingAndGlyphs" >New Component</text>
<rect x="1059.3" y="350" width="15.6" height="15" rx="3.2" fill="url(#cbg)" stroke="#c2c2c2" stroke-width="1" opacity="0.9"/>
<text x="946.1" y="401" font-family="Liberation Sans, sans-serif" font-size="13" fill="#222" textLength="61.9" lengthAdjust="spacingAndGlyphs" >Keep Tools</text>
<rect x="1059.3" y="387.2" width="15.6" height="15" rx="3.2" fill="url(#cbg)" stroke="#4a4a4a" stroke-width="1.2"/>
<circle cx="951" cy="448.6" r="7.2" fill="#0a0a0a"/><circle cx="951" cy="444.6" r="1.5" fill="#fff"/><path d="M949.3,447.2 H952.4 V452.4 H949.6 V448.6 H949.3 Z" fill="#fff"/>
<rect x="1100.5" y="437.7" width="59" height="22" fill="#e6e6e6" stroke="#c3c3c3" stroke-width="1"/>
<text x="1119.5" y="453.4" font-family="Liberation Sans, sans-serif" font-size="14.5" fill="#555" textLength="21.3" lengthAdjust="spacingAndGlyphs" >OK</text>
<rect x="1172.3" y="437.7" width="59.2" height="22" fill="#e9e9e9" stroke="#c3c3c3" stroke-width="1"/>
<text x="1179.3" y="453.4" font-family="Liberation Sans, sans-serif" font-size="14.5" fill="#555" textLength="45.5" lengthAdjust="spacingAndGlyphs" >Cancel</text>
</svg>
<svg class="abs" id="vc" style="left:1130px;top:82px" width="118" height="100" viewBox="1130 82 118 100">
<defs><linearGradient id="vcg" x1="0" y1="0" x2="1" y2="1"><stop offset="0" stop-color="#ececec"/><stop offset="1" stop-color="#d6d6d6"/></linearGradient>
<filter id="vcb" x="-20%" y="-200%" width="140%" height="500%"><feGaussianBlur stdDeviation="2"/></filter></defs>
<ellipse cx="1182" cy="170.5" rx="33" ry="2.6" fill="#9a9a9a" opacity="0.55" filter="url(#vcb)"/>
<rect x="1159.5" y="113.5" width="52.5" height="52.5" fill="url(#vcg)" stroke="#9a9a9a" stroke-width="1"/>
<path d="M1159.5,113.5 H1212" stroke="#888" stroke-width="1"/>
<rect x="1169" y="123" width="32" height="32" fill="#e2e2e4" opacity="0.9"/>
<text x="1173.6" y="144.7" font-family="Liberation Sans, sans-serif" font-weight="bold" font-size="15" fill="#8c8c8c" textLength="24" lengthAdjust="spacingAndGlyphs">LEFT</text>
<path d="M1158.5,105 V167" stroke="#6ee272" stroke-width="2"/>
<path d="M1158,166.6 H1220" stroke="#5a60d0" stroke-width="2.2"/>
<text x="1155" y="101" font-family="Liberation Sans, sans-serif" font-size="13" fill="#86e08a" stroke="#86e08a" stroke-width="0.5" textLength="8.4" lengthAdjust="spacingAndGlyphs">Y</text>
<text x="1224.4" y="171.4" font-family="Liberation Sans, sans-serif" font-size="15" fill="#7b80e2" stroke="#7b80e2" stroke-width="0.5" textLength="8" lengthAdjust="spacingAndGlyphs">Z</text>
</svg>
<div class="abs" id="rightedge"></div>
</body></html>
